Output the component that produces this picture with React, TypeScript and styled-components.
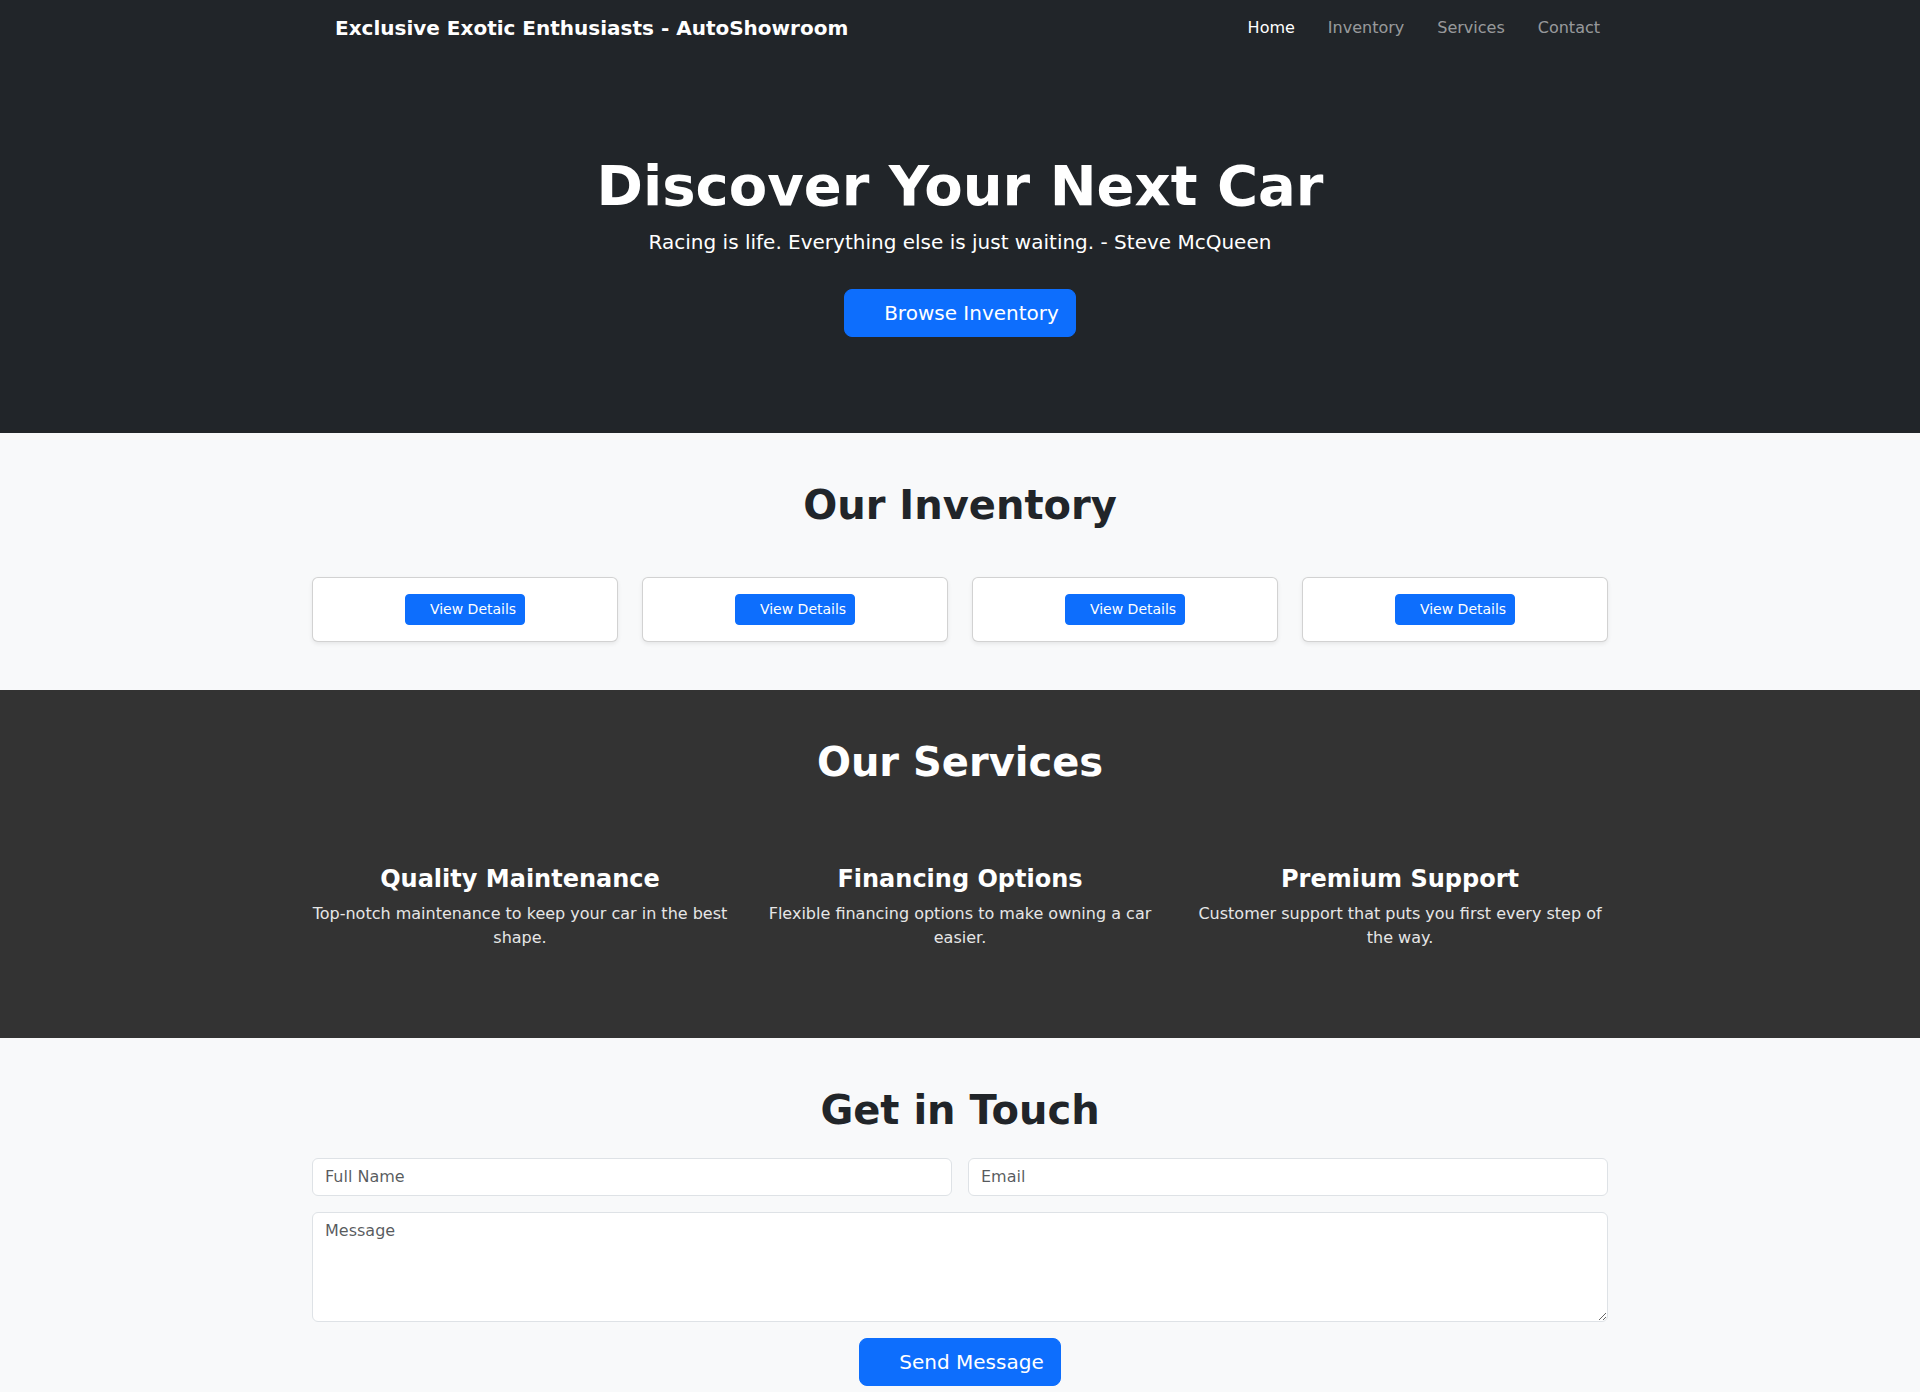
import React from 'react';
import styled, { createGlobalStyle, css } from 'styled-components';

const services = [
  { title: 'Quality Maintenance', text: 'Top-notch maintenance to keep your car in the best shape.' },
  { title: 'Financing Options', text: 'Flexible financing options to make owning a car easier.' },
  { title: 'Premium Support', text: 'Customer support that puts you first every step of the way.' },
];

const navItems = ['Home', 'Inventory', 'Services', 'Contact'];

const App: React.FC = () => {
  return (
    <>
      <GlobalStyle />
      <Navbar>
        <NavContainer>
          <Brand href='#'>
            <IconSlot />
            Exclusive Exotic Enthusiasts - AutoShowroom
          </Brand>
          <NavList>
            {navItems.map((item, i) => (
              <NavLink key={item} href='#' active={i === 0}>
                {item}
              </NavLink>
            ))}
          </NavList>
        </NavContainer>
      </Navbar>

      <Hero>
        <Container>
          <HeroTitle>Discover Your Next Car</HeroTitle>
          <Lead>Racing is life. Everything else is just waiting. - Steve McQueen</Lead>
          <Button size='lg'>
            <IconSlot />
            Browse Inventory
          </Button>
        </Container>
      </Hero>

      <Section tone='light'>
        <Container>
          <SectionTitle gap={48}>Our Inventory</SectionTitle>
          <CardGrid>
            {[0, 1, 2, 3].map(i => (
              <Card key={i}>
                <Button size='sm'>
                  <IconSlot />
                  View Details
                </Button>
              </Card>
            ))}
          </CardGrid>
        </Container>
      </Section>

      <Section tone='dark'>
        <Container>
          <SectionTitle gap={79}>Our Services</SectionTitle>
          <ServiceGrid>
            {services.map(s => (
              <Service key={s.title}>
                <ServiceTitle>{s.title}</ServiceTitle>
                <ServiceText>{s.text}</ServiceText>
              </Service>
            ))}
          </ServiceGrid>
        </Container>
      </Section>

      <Section tone='light'>
        <Container>
          <SectionTitle gap={24}>Get in Touch</SectionTitle>
          <Form onSubmit={e => e.preventDefault()}>
            <Input type='text' placeholder='Full Name' />
            <Input type='email' placeholder='Email' />
            <TextArea placeholder='Message' rows={4} />
            <SubmitRow>
              <Button size='lg' type='submit'>
                <IconSlot />
                Send Message
              </Button>
            </SubmitRow>
          </Form>
        </Container>
      </Section>

      <Footer>
        <Container>
          <FooterText>© 2024 Exclusive Exotic Enthusiasts - AutoShowroom. All rights reserved.</FooterText>
          <FooterSmall>Privacy Policy · Terms of Service</FooterSmall>
        </Container>
      </Footer>
    </>
  );
};

const GlobalStyle = createGlobalStyle`
  *, *::before, *::after {
    box-sizing: border-box;
  }

  body {
    margin: 0;
    font-family: "DejaVu Sans", "Liberation Sans", sans-serif;
    font-size: 16px;
    line-height: 1.5;
    color: #212529;
    background: #fff;
  }
`;

const Container = styled.div`
  max-width: 1320px;
  margin: 0 auto;
  padding: 0 12px;
`;

// font awesome icons never loaded, they still take up room before the label
const IconSlot = styled.span`
  display: inline-block;
  width: 1.15em;
`;

const Navbar = styled.nav`
  background-color: #212529;
  padding: 8px 0;
`;

const NavContainer = styled(Container)`
  display: flex;
  align-items: center;
  justify-content: space-between;
`;

const Brand = styled.a`
  padding: 5px 0;
  font-size: 20px;
  line-height: 30px;
  font-weight: 700;
  color: #fff;
  text-decoration: none;
`;

const NavList = styled.div`
  display: flex;
  gap: 17px;
`;

const NavLink = styled.a<{ active?: boolean }>`
  padding: 8px;
  line-height: 24px;
  color: rgba(255, 255, 255, 0.55);
  text-decoration: none;

  ${p =>
    p.active &&
    css`
      color: #fff;
    `};
`;

const Hero = styled.header`
  background-color: #212529;
  color: #fff;
  text-align: center;
  padding: 96px 0;
`;

const HeroTitle = styled.h1`
  margin: 0 0 8px;
  font-size: 56px;
  line-height: 1.2;
  font-weight: 700;
`;

const Lead = styled.p`
  margin: 0 0 32px;
  font-size: 20px;
`;

const Button = styled.button<{ size?: 'sm' | 'lg' }>`
  display: inline-block;
  font-family: inherit;
  color: #fff;
  background-color: #0d6efd;
  border: 1px solid #0d6efd;
  cursor: pointer;
  padding: 6px 12px;
  font-size: 16px;
  line-height: 1.5;
  border-radius: 6px;

  ${p =>
    p.size === 'lg' &&
    css`
      padding: 8px 16px;
      font-size: 20px;
      border-radius: 8px;
    `};

  ${p =>
    p.size === 'sm' &&
    css`
      padding: 4px 8px;
      font-size: 14px;
      border-radius: 4px;
    `};
`;

const Section = styled.section<{ tone: 'light' | 'dark' }>`
  padding: 48px 0;
  background-color: #f8f9fa;

  ${p =>
    p.tone === 'dark' &&
    css`
      background-color: #333;
      color: #fff;
    `};
`;

const SectionTitle = styled.h2<{ gap: number }>`
  margin: 0 0 ${p => p.gap}px;
  text-align: center;
  font-size: 40px;
  line-height: 1.2;
  font-weight: 700;
`;

const CardGrid = styled.div`
  display: grid;
  grid-template-columns: repeat(4, 1fr);
  gap: 24px;
`;

const Card = styled.div`
  background-color: #fff;
  border: 1px solid rgba(0, 0, 0, 0.175);
  border-radius: 6px;
  box-shadow: 0 2px 4px rgba(0, 0, 0, 0.075);
  padding: 16px;
  text-align: center;
`;

const ServiceGrid = styled.div`
  display: grid;
  grid-template-columns: repeat(3, 1fr);
  gap: 24px;
`;

const Service = styled.div`
  text-align: center;
  margin-bottom: 24px;
`;

const ServiceTitle = styled.h4`
  margin: 0 0 8px;
  font-size: 24px;
  line-height: 1.2;
  font-weight: 700;
`;

const ServiceText = styled.p`
  margin: 0 0 16px;
  color: #e6e6e6;
`;

const Form = styled.form`
  display: grid;
  grid-template-columns: 1fr 1fr;
  gap: 16px;
`;

const fieldStyle = css`
  display: block;
  width: 100%;
  padding: 6px 12px;
  font-family: inherit;
  font-size: 16px;
  line-height: 1.5;
  color: #212529;
  background-color: #fff;
  border: 1px solid #dee2e6;
  border-radius: 6px;

  &::placeholder {
    color: rgba(33, 37, 41, 0.75);
  }
`;

const Input = styled.input`
  ${fieldStyle};
`;

const TextArea = styled.textarea`
  ${fieldStyle};
  grid-column: 1 / -1;
  height: 110px;
  resize: vertical;
`;

const SubmitRow = styled.div`
  grid-column: 1 / -1;
  text-align: center;
`;

const Footer = styled.footer`
  background-color: #212529;
  color: #fff;
  text-align: center;
  padding: 24px 0;
`;

const FooterText = styled.p`
  margin: 0;
`;

const FooterSmall = styled.p`
  margin: 0;
  font-size: 14px;
  color: rgba(255, 255, 255, 0.55);
`;

export default App;
